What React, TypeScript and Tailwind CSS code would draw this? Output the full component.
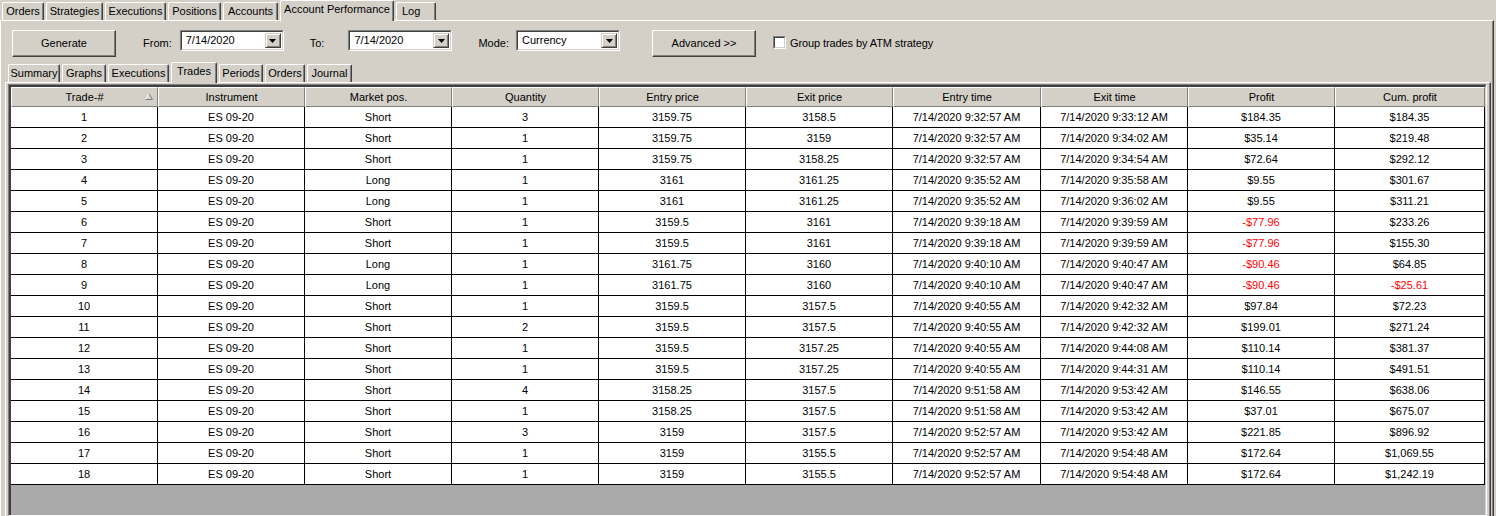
import React from "react";

type Trade = {
  id: number;
  pos: "Short" | "Long";
  qty: number;
  entry: string;
  exit: string;
  entryTime: string;
  exitTime: string;
  profit: string;
  cum: string;
};

const t = (
  id: number,
  pos: "Short" | "Long",
  qty: number,
  entry: string,
  exit: string,
  entryTime: string,
  exitTime: string,
  profit: string,
  cum: string
): Trade => ({ id, pos, qty, entry, exit, entryTime, exitTime, profit, cum });

const trades: Trade[] = [
  t(1, "Short", 3, "3159.75", "3158.5", "9:32:57", "9:33:12", "$184.35", "$184.35"),
  t(2, "Short", 1, "3159.75", "3159", "9:32:57", "9:34:02", "$35.14", "$219.48"),
  t(3, "Short", 1, "3159.75", "3158.25", "9:32:57", "9:34:54", "$72.64", "$292.12"),
  t(4, "Long", 1, "3161", "3161.25", "9:35:52", "9:35:58", "$9.55", "$301.67"),
  t(5, "Long", 1, "3161", "3161.25", "9:35:52", "9:36:02", "$9.55", "$311.21"),
  t(6, "Short", 1, "3159.5", "3161", "9:39:18", "9:39:59", "-$77.96", "$233.26"),
  t(7, "Short", 1, "3159.5", "3161", "9:39:18", "9:39:59", "-$77.96", "$155.30"),
  t(8, "Long", 1, "3161.75", "3160", "9:40:10", "9:40:47", "-$90.46", "$64.85"),
  t(9, "Long", 1, "3161.75", "3160", "9:40:10", "9:40:47", "-$90.46", "-$25.61"),
  t(10, "Short", 1, "3159.5", "3157.5", "9:40:55", "9:42:32", "$97.84", "$72.23"),
  t(11, "Short", 2, "3159.5", "3157.5", "9:40:55", "9:42:32", "$199.01", "$271.24"),
  t(12, "Short", 1, "3159.5", "3157.25", "9:40:55", "9:44:08", "$110.14", "$381.37"),
  t(13, "Short", 1, "3159.5", "3157.25", "9:40:55", "9:44:31", "$110.14", "$491.51"),
  t(14, "Short", 4, "3158.25", "3157.5", "9:51:58", "9:53:42", "$146.55", "$638.06"),
  t(15, "Short", 1, "3158.25", "3157.5", "9:51:58", "9:53:42", "$37.01", "$675.07"),
  t(16, "Short", 3, "3159", "3157.5", "9:52:57", "9:53:42", "$221.85", "$896.92"),
  t(17, "Short", 1, "3159", "3155.5", "9:52:57", "9:54:48", "$172.64", "$1,069.55"),
  t(18, "Short", 1, "3159", "3155.5", "9:52:57", "9:54:48", "$172.64", "$1,242.19"),
];

// column widths incl. the 1px right border
const colW = [
  "w-[147px]",
  "w-[147px]",
  "w-[147px]",
  "w-[147px]",
  "w-[147px]",
  "w-[147px]",
  "w-[148px]",
  "w-[147px]",
  "w-[147px]",
  "w-[150px]",
];

const headers = [
  "Trade-#",
  "Instrument",
  "Market pos.",
  "Quantity",
  "Entry price",
  "Exit price",
  "Entry time",
  "Exit time",
  "Profit",
  "Cum. profit",
];

const mainTabs = [
  { label: "Orders", w: "w-[42px]" },
  { label: "Strategies", w: "w-[57px]" },
  { label: "Executions", w: "w-[61px]" },
  { label: "Positions", w: "w-[53px]" },
  { label: "Accounts", w: "w-[55px]" },
  { label: "Account Performance", w: "w-[114px]", active: true },
  { label: "Log", w: "w-[40px]", left: true },
];

const subTabs = [
  { label: "Summary", w: "w-[52px]" },
  { label: "Graphs", w: "w-[44px]" },
  { label: "Executions", w: "w-[61px]" },
  { label: "Trades", w: "w-[46px]", active: true },
  { label: "Periods", w: "w-[44px]" },
  { label: "Orders", w: "w-[40px]" },
  { label: "Journal", w: "w-[45px]" },
];

const Tab = ({ label, w, active, left }: { label: string; w: string; active?: boolean; left?: boolean }) => (
  <div
    className={`${w} ${active ? "h-[21px] pb-[3px] relative z-10 -mb-px bg-[#d4d0c8]" : "h-[18px]"} flex items-center ${
      left ? "justify-start pl-[5px]" : "justify-center"
    } border-t border-l border-white border-r border-r-[#404040] rounded-t-[2px] shadow-[inset_-1px_0_0_#808080]`}
  >
    <span className="whitespace-nowrap">{label}</span>
  </div>
);

const Button = ({ label }: { label: string }) => (
  <div className="w-[104px] h-[27px] flex items-center justify-center border border-t-white border-l-white border-r-[#404040] border-b-[#404040] shadow-[inset_-1px_-1px_0_#808080]">
    {label}
  </div>
);

const Combo = ({ value, w }: { value: string; w: string }) => (
  <div className={`${w} h-[21px] flex items-center border border-t-[#808080] border-l-[#808080] border-r-white border-b-white`}>
    <div className="flex-1 h-full flex items-center bg-white border border-t-[#404040] border-l-[#404040] border-r-[#d4d0c8] border-b-[#d4d0c8] pl-[2px] pr-px">
      <span className="flex-1 pl-[2px]">{value}</span>
      <div className="w-[16px] h-[15px] bg-[#d4d0c8] flex items-center justify-center border border-t-[#d4d0c8] border-l-[#d4d0c8] border-r-[#404040] border-b-[#404040] shadow-[inset_1px_1px_0_#ffffff,inset_-1px_-1px_0_#808080]">
        <svg width="7" height="4" viewBox="0 0 7 4">
          <path d="M0 0h7L3.5 4z" fill="#000" />
        </svg>
      </div>
    </div>
  </div>
);

export default function App() {
  return (
    <div
      className="w-[1496px] h-[516px] bg-[#d4d0c8] overflow-hidden flex flex-col text-[11px] text-black leading-none"
      style={{ fontFamily: '"Liberation Sans", Arial, sans-serif' }}
    >
      {/* main tab strip */}
      <div className="h-[20px] flex items-end gap-[2px] pl-[2px]">
        {mainTabs.map((tab) => (
          <Tab key={tab.label} {...tab} />
        ))}
      </div>

      {/* outer panel */}
      <div className="flex-1 flex flex-col w-[1494px] border-t border-l border-white border-r border-r-[#404040] shadow-[inset_-1px_0_0_#808080] pl-[4px] pr-[2px] min-h-0">
        {/* toolbar */}
        <div className="h-[41px] pt-[9px] flex items-start">
          <div className="ml-[7px]">
            <Button label="Generate" />
          </div>
          <span className="ml-[27px] mt-[8px]">From:</span>
          <div className="ml-[8px]">
            <Combo value="7/14/2020" w="w-[104px]" />
          </div>
          <span className="ml-[26px] mt-[8px]">To:</span>
          <div className="ml-[24px]">
            <Combo value="7/14/2020" w="w-[104px]" />
          </div>
          <span className="ml-[26px] mt-[8px]">Mode:</span>
          <div className="ml-[7px]">
            <Combo value="Currency" w="w-[104px]" />
          </div>
          <div className="ml-[32px]">
            <Button label="Advanced >>" />
          </div>
          <div className="ml-[17px] mt-[6px] w-[13px] h-[13px] border border-t-[#808080] border-l-[#808080] border-r-white border-b-white">
            <div className="w-full h-full bg-white border border-t-[#404040] border-l-[#404040] border-r-[#d4d0c8] border-b-[#d4d0c8]" />
          </div>
          <span className="ml-[4px] mt-[8px] tracking-[-0.1px]">Group trades by ATM strategy</span>
        </div>

        {/* sub tab strip */}
        <div className="h-[20px] flex items-end gap-[2px] pl-[3px]">
          {subTabs.map((tab) => (
            <Tab key={tab.label} {...tab} />
          ))}
        </div>

        {/* sub panel */}
        <div className="flex-1 flex flex-col border-t border-l border-white border-r border-r-[#404040] shadow-[inset_-1px_0_0_#808080] pt-px pl-[2px] pr-[3px] min-h-0">
          {/* grid */}
          <div className="flex-1 flex flex-col min-h-0 border border-t-[#808080] border-l-[#808080] border-r-white border-b-white">
            <div className="flex-1 flex flex-col min-h-0 bg-[#aaaaaa] border-t-2 border-l-2 border-[#404040] border-r border-r-[#d4d0c8]">
              {/* header */}
              <div className="flex h-[20px] bg-[#d4d0c8]">
                {headers.map((h, i) => (
                  <div
                    key={h}
                    className={`${colW[i]} relative flex items-center justify-center border-t border-l border-white border-r border-r-[#808080] border-b border-b-[#808080]`}
                  >
                    {h}
                    {i === 0 && (
                      <svg className="absolute right-[4px] top-[5px]" width="8" height="7" viewBox="0 0 8 7">
                        <path d="M4 0.5L0.5 6.5" stroke="#ffffff" fill="none" />
                        <path d="M4 0.5L7.5 6.5M0.5 6.5H7.5" stroke="#808080" fill="none" />
                      </svg>
                    )}
                  </div>
                ))}
              </div>
              {/* rows */}
              {trades.map((r) => {
                const cells = [
                  String(r.id),
                  "ES 09-20",
                  r.pos,
                  String(r.qty),
                  r.entry,
                  r.exit,
                  `7/14/2020 ${r.entryTime} AM`,
                  `7/14/2020 ${r.exitTime} AM`,
                  r.profit,
                  r.cum,
                ];
                return (
                  <div key={r.id} className="flex h-[21px] bg-white">
                    {cells.map((c, i) => (
                      <div
                        key={i}
                        className={`${colW[i]} flex items-center justify-center border-r border-b border-black ${
                          c.startsWith("-") ? "text-[#ff0000]" : ""
                        }`}
                      >
                        {c}
                      </div>
                    ))}
                  </div>
                );
              })}
            </div>
          </div>
        </div>
      </div>
    </div>
  );
}
